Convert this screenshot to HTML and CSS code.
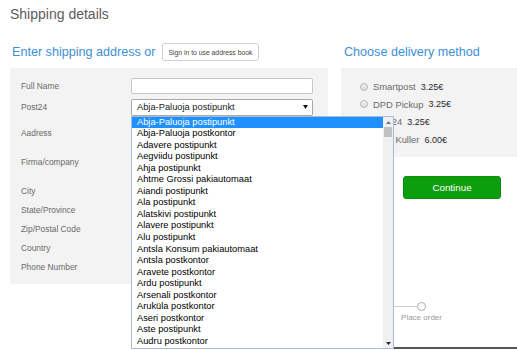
FILE: index.html
```html
<!DOCTYPE html>
<html lang="en">
<head>
<meta charset="utf-8">
<title>Shipping details</title>
<link rel="stylesheet" href="styles.css">
</head>
<body>
<div class="page">
  <h1 class="title">Shipping details</h1>
  <div class="columns">
    <section class="col-left">
      <div class="head-row">
        <h2 class="section-title">Enter shipping address or</h2>
        <button class="signin" type="button">Sign in to use address book</button>
      </div>
      <div class="panel form">
        <div class="row row--first">
          <span class="label">Full Name</span>
          <span class="input"></span>
        </div>
        <div class="row row--post">
          <span class="label">Post24</span>
          <div class="select-wrap">
            <div class="select">
              <span class="select-value">Abja-Paluoja postipunkt</span>
              <svg class="select-arrow" width="5" height="4" viewBox="0 0 5 4"><path d="M0 0H5L2.5 4Z" fill="#111"/></svg>
            </div>
            <div class="dropdown">
              <ul class="options">
                <li class="option option--active">Abja-Paluoja postipunkt</li>
                <li class="option">Abja-Paluoja postkontor</li>
                <li class="option">Adavere postipunkt</li>
                <li class="option">Aegviidu postipunkt</li>
                <li class="option">Ahja postipunkt</li>
                <li class="option">Ahtme Grossi pakiautomaat</li>
                <li class="option">Aiandi postipunkt</li>
                <li class="option">Ala postipunkt</li>
                <li class="option">Alatskivi postipunkt</li>
                <li class="option">Alavere postipunkt</li>
                <li class="option">Alu postipunkt</li>
                <li class="option">Antsla Konsum pakiautomaat</li>
                <li class="option">Antsla postkontor</li>
                <li class="option">Aravete postkontor</li>
                <li class="option">Ardu postipunkt</li>
                <li class="option">Arsenali postkontor</li>
                <li class="option">Aruküla postkontor</li>
                <li class="option">Aseri postkontor</li>
                <li class="option">Aste postipunkt</li>
                <li class="option">Audru postkontor</li>
              </ul>
              <div class="scrollbar">
                <svg class="sb-arrow" width="5" height="3" viewBox="0 0 5 3"><path d="M0 3H5L2.5 0Z" fill="#777"/></svg>
                <div class="sb-thumb"></div>
                <div class="sb-track"></div>
                <svg class="sb-arrow" width="5" height="3" viewBox="0 0 5 3"><path d="M0 0H5L2.5 3Z" fill="#222"/></svg>
              </div>
            </div>
          </div>
        </div>
        <div class="row row--addr"><span class="label">Aadress</span></div>
        <div class="row row--firma"><span class="label">Firma/company</span></div>
        <div class="row row--city"><span class="label">City</span></div>
        <div class="row"><span class="label">State/Province</span></div>
        <div class="row"><span class="label">Zip/Postal Code</span></div>
        <div class="row"><span class="label">Country</span></div>
        <div class="row"><span class="label">Phone Number</span></div>
      </div>
    </section>
    <section class="col-right">
      <div class="head-row">
        <h2 class="section-title">Choose delivery method</h2>
      </div>
      <div class="panel methods">
        <label class="method"><span class="radio"></span><span class="method-name">Smartpost</span><span class="price">3.25€</span></label>
        <label class="method"><span class="radio"></span><span class="method-name">DPD Pickup</span><span class="price">3.25€</span></label>
        <label class="method"><span class="radio"></span><span class="method-name">Post24</span><span class="price">3.25€</span></label>
        <label class="method"><span class="radio"></span><span class="method-name">DPD Kuller</span><span class="price">6.00€</span></label>
      </div>
      <div class="actions">
        <button class="continue" type="button">Continue</button>
      </div>
      <div class="steps">
        <span class="step-line"></span>
        <div class="step">
          <span class="step-dot"></span>
          <span class="step-label">Place order</span>
        </div>
      </div>
      <div class="rule"></div>
    </section>
  </div>
</div>
</body>
</html>
```

FILE: styles.css
```css
* { box-sizing: border-box; }
html, body { margin: 0; padding: 0; background: #fff; }
body {
  font-family: "Liberation Sans", Arial, sans-serif;
  color: #555;
  width: 517px;
  height: 350px;
  overflow: hidden;
}
.page { padding: 0 0 0 10px; }

.title {
  margin: 0;
  height: 40px;
  padding-top: 5px;
  font-size: 14px;
  line-height: 18px;
  font-weight: normal;
  color: #5c5c5c;
}

.columns { display: flex; gap: 13px; align-items: flex-start; }
.col-left { width: 318px; flex: none; }
.col-right { flex: 1; min-width: 0; }

.head-row {
  height: 24px;
  display: flex;
  align-items: center;
  gap: 6px;
  padding-left: 2px;
}
.section-title {
  margin: 0;
  font-size: 12.6px;
  line-height: 16px;
  font-weight: normal;
  color: #3d8fd6;
}
.col-right .head-row { padding-left: 3px; }

.signin {
  height: 18px;
  padding: 0 6px;
  border: 1px solid #cfcfcf;
  border-radius: 3px;
  background: #fff;
  font-family: "Liberation Sans", Arial, sans-serif;
  font-size: 6.8px;
  color: #444;
}

.panel { background: #f3f3f3; margin-top: 4px; }

.form { padding: 9px 15px 9px 11px; height: 216px; }
.row { display: flex; align-items: center; height: 18px; margin-top: 1px; }
.row--first { margin-top: 0; }
.row--post { margin-top: 3px; }
.row--addr { margin-top: 8px; }
.row--firma { margin-top: 11px; }
.row--city { margin-top: 11px; }
.label { width: 110px; flex: none; font-size: 8.4px; color: #6a6a6a; }

.input {
  display: block;
  width: 182px;
  height: 16px;
  background: #fff;
  border: 1px solid #c8c8c8;
  border-radius: 2px;
}

.select-wrap { position: relative; width: 182px; }
.select {
  height: 17px;
  background: #fff;
  border: 1px solid #a9a9a9;
  border-radius: 2px;
  display: flex;
  align-items: center;
  justify-content: space-between;
  padding: 0 4px 0 5px;
  font-size: 9.3px;
  color: #222;
}
.select-arrow { display: block; }

.dropdown {
  position: absolute;
  top: 17px;
  left: 0;
  width: 263px;
  height: 233px;
  background: #fff;
  border: 1px solid #a3bbdd;
  display: flex;
  z-index: 5;
}
.options {
  list-style: none;
  margin: 0;
  padding: 0;
  flex: 1;
  font-size: 9.3px;
  line-height: 11.55px;
  color: #000;
}
.option { padding-left: 5px; white-space: nowrap; }
.option--active { background: #1e90ff; color: #fff; }

.scrollbar {
  width: 10px;
  flex: none;
  background: #f0f0f0;
  display: flex;
  flex-direction: column;
  align-items: center;
}
.sb-arrow { display: block; margin: 4px 0 3px; }
.sb-thumb { width: 8px; height: 10px; background: #c1c1c1; }
.sb-track { flex: 1; }

.methods { height: 89px; padding: 10px 0 0 19px; }
.method { display: flex; align-items: center; height: 17.6px; font-size: 9.4px; white-space: nowrap; }
.radio {
  width: 8px;
  height: 8px;
  border-radius: 50%;
  border: 1px solid #b8b8b8;
  background: linear-gradient(#f0f0f0, #dcdcdc);
  margin-right: 5px;
  flex: none;
}
.method-name { color: #6a6a6a; margin-right: 5px; }
.price { color: #2a2a2a; font-size: 9px; }

.actions { padding: 19px 0 0 62px; }
.continue {
  width: 98px;
  height: 23px;
  border: 1px solid #0a8f0a;
  border-radius: 3px;
  background: #0c9e0c;
  color: #fff;
  font-family: "Liberation Sans", Arial, sans-serif;
  font-size: 9.8px;
  padding: 0;
}

.steps { display: flex; align-items: flex-start; margin-top: 103px; }
.step-line { width: 76px; height: 1px; background: #cfcfcf; margin-top: 4px; flex: none; }
.step { width: 9px; display: flex; flex-direction: column; align-items: center; }
.step-dot { width: 9px; height: 9px; border-radius: 50%; border: 1px solid #aaa; background: #fff; }
.step-label { white-space: nowrap; font-size: 8px; color: #9a9a9a; margin-top: 2px; }

.rule { height: 2px; background: #555; margin-top: 25px; }
```
